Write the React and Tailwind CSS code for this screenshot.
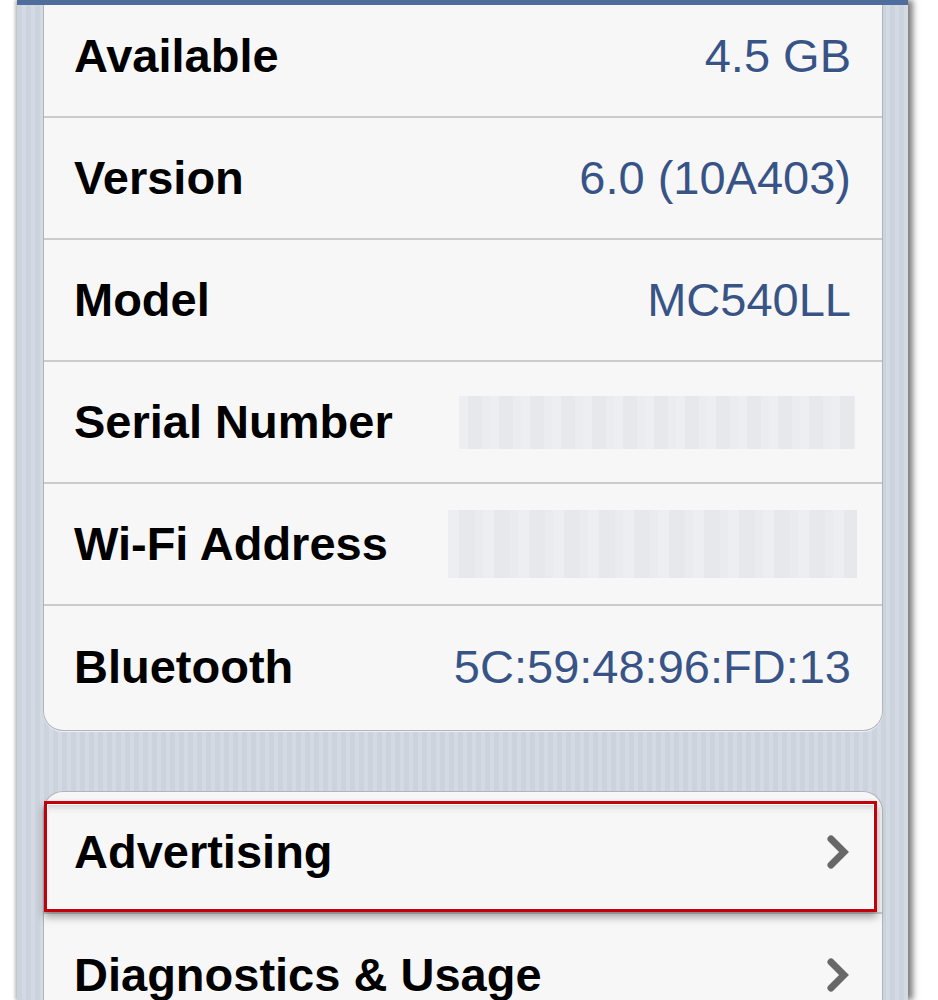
import React from "react";

const rows = [
  { label: "Version", value: "6.0 (10A403)" },
  { label: "Model", value: "MC540LL" },
  { label: "Serial Number", blur: "serial" },
  { label: "Wi-Fi Address", blur: "wifi" },
  { label: "Bluetooth", value: "5C:59:48:96:FD:13" },
];

const labelCls =
  "text-[47px] font-bold text-black [text-shadow:0_1px_0_#fff]";
const valueCls = "text-[47px] text-[#385487] [text-shadow:0_1px_0_#fff]";

function Chevron() {
  return (
    <svg width="26" height="36" viewBox="0 0 26 36" className="shrink-0">
      <polyline
        points="6,5 19,18 6,31"
        fill="none"
        stroke="#686868"
        strokeWidth="7"
        strokeLinecap="round"
        strokeLinejoin="miter"
      />
    </svg>
  );
}

function Blur({ kind }) {
  if (kind === "serial") {
    return (
      <div className="mr-[-4px] h-[53px] w-[396px] bg-[repeating-linear-gradient(90deg,#eceef1_0_9px,#e6e8ec_9px_23px,#eaecef_23px_31px)]" />
    );
  }
  return (
    <div className="mr-[-6px] h-[68px] w-[409px] bg-[repeating-linear-gradient(90deg,#eceef1_0_11px,#e6e8eb_11px_27px,#e9ebee_27px_35px)]" />
  );
}

export default function App() {
  return (
    <div className="min-h-screen bg-white" style={{ fontFamily: '"Liberation Sans", Arial, sans-serif' }}>
      <div className="ml-[17px] h-[1000px] w-[891px] overflow-hidden bg-[repeating-linear-gradient(90deg,#cdd3dd_0_5px,#d4dae4_5px_9px)] shadow-[5px_0_6px_rgba(0,0,0,0.5),-2px_0_3px_rgba(0,0,0,0.25)]">
        <div className="h-[5px] bg-[#4f6d9c]" />

        <div className="pl-[26px] pr-[25px]">
          {/* first group */}
          <div className="overflow-hidden rounded-b-[20px] border border-t-0 border-[#b1b5bb] bg-[#f7f7f7] shadow-[0_1px_0_#eef1f5]">
            <div className="flex h-[113px] items-center justify-between border-b-2 border-[#cbcbcb] pb-[9px] pl-[30px] pr-[31px]">
              <span className={labelCls}>Available</span>
              <span className={valueCls}>4.5 GB</span>
            </div>
            {rows.map((r, i) => (
              <div
                key={r.label}
                className={
                  "flex items-center justify-between pl-[30px] pr-[31px] " +
                  (i < rows.length - 1 ? "h-[122px] border-b-2 border-[#cbcbcb]" : "h-[124px] pb-[2px]")
                }
              >
                <span className={labelCls}>{r.label}</span>
                {r.blur ? <Blur kind={r.blur} /> : <span className={valueCls}>{r.value}</span>}
              </div>
            ))}
          </div>

          <div className="h-[60px]" />

          {/* second group */}
          <div className="relative rounded-t-[20px] border border-b-0 border-[#b1b5bb] bg-[#f7f7f7]">
            <div className="flex h-[122px] items-center justify-between border-b-2 border-[#cbcbcb] pl-[30px] pr-[31px]">
              <span className={labelCls}>Advertising</span>
              <Chevron />
            </div>
            <div className="flex h-[122px] items-center justify-between pl-[30px] pr-[31px]">
              <span className={labelCls}>Diagnostics &amp; Usage</span>
              <Chevron />
            </div>

            <div className="pointer-events-none absolute left-0 top-[9px] h-[111px] w-[833px] border-[3px] border-[#c4000b] shadow-[0_5px_8px_rgba(0,0,0,0.35),inset_0_0_0_1px_#ffffff,inset_0_8px_8px_-6px_rgba(0,0,0,0.2)]" />
          </div>
        </div>
      </div>
    </div>
  );
}
